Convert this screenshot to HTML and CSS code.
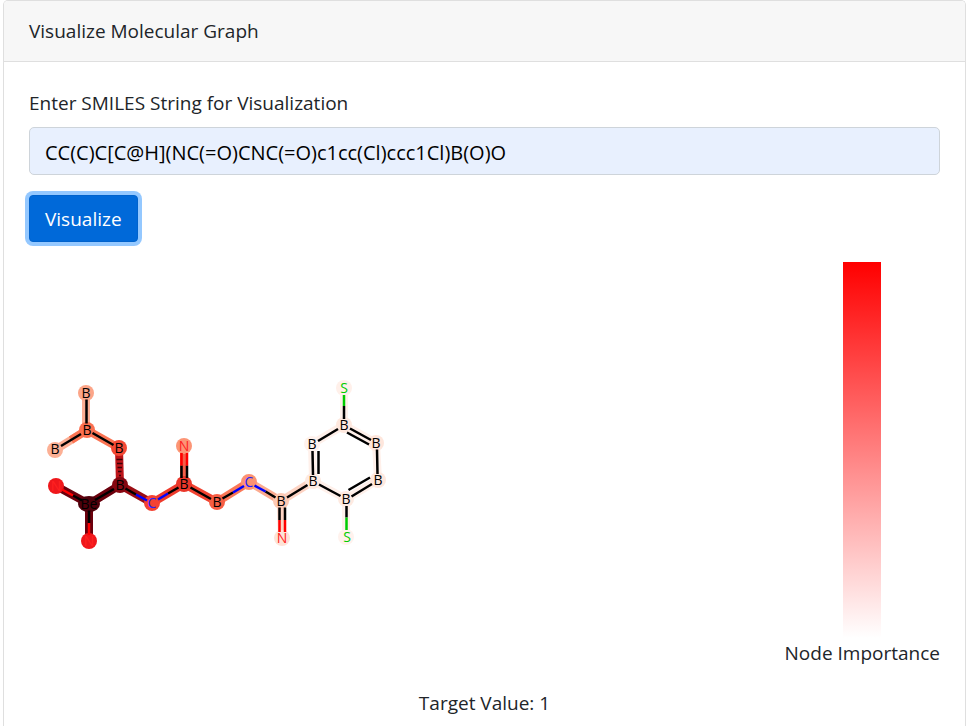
FILE: index.html
```html
<!DOCTYPE html>
<html lang="en">
<head>
<meta charset="utf-8">
<meta name="viewport" content="width=device-width, initial-scale=1">
<title>Visualize Molecular Graph</title>
<link rel="stylesheet" href="styles.css">
</head>
<body>
<main class="card">
  <header class="card-header">Visualize Molecular Graph</header>
  <div class="card-body">
    <form class="smiles-form">
      <label for="smiles">Enter SMILES String for Visualization</label>
      <input id="smiles" type="text" value="CC(C)C[C@H](NC(=O)CNC(=O)c1cc(Cl)ccc1Cl)B(O)O">
      <button type="button">Visualize</button>
    </form>
    <section class="result">
      <svg class="molecule" viewBox="29 262 375 375" role="img" aria-label="Molecular graph">
        <g class="halo">
          <path stroke="#fcae94" d="M86 393L86 430M55 450L87 430"/>
          <path stroke="#fb7453" d="M71 440L87 430L119 448"/>
          <path stroke="#bd151a" d="M119 448L120 485"/>
          <path stroke="#9b0d14" d="M120 485L152 503"/>
          <path stroke="#6b000d" d="M120 485L89 504L56 486M89 504L89 541"/>
          <path stroke="#ee3a2c" d="M152 503L184 484"/>
          <path stroke="#f4604a" d="M184 484L184 446"/>
          <path stroke="#f14331" d="M184 484L217 502"/>
          <path stroke="#fb7858" d="M217 502L249 482"/>
          <path stroke="#fcab90" d="M249 482L281 501"/>
          <path stroke="#fdd3c3" d="M281 501L282 538M281 501L313 481"/>
          <path stroke="#fff0ea" d="M313 481L312 444L344 425L376 443L378 480L346 499ZM344 425L344 388M346 499L346 537"/>
        </g>
        <g class="nodes">
          <circle cx="86" cy="393" r="8" fill="#fca588"/>
          <circle cx="87" cy="430" r="8" fill="#fb7050"/>
          <circle cx="55" cy="450" r="8" fill="#fcb095"/>
          <circle cx="119" cy="448" r="8" fill="#f34935"/>
          <circle cx="120" cy="485" r="8" fill="#850711"/>
          <ellipse cx="89" cy="504" rx="11" ry="8" fill="#4e000b"/>
          <circle cx="56" cy="486" r="8" fill="#ef171b"/>
          <circle cx="89" cy="541" r="8" fill="#ef171b"/>
          <circle cx="152" cy="503" r="8" fill="#f44232"/>
          <circle cx="184" cy="484" r="8" fill="#ea372a"/>
          <circle cx="184" cy="446" r="8" fill="#fc9576"/>
          <circle cx="217" cy="502" r="8" fill="#f75d43"/>
          <circle cx="249" cy="482" r="8" fill="#fc9272"/>
          <circle cx="281" cy="501" r="8" fill="#fdc9b4"/>
          <circle cx="282" cy="538" r="8" fill="#fee2d7"/>
          <circle cx="313" cy="481" r="8" fill="#feeae1"/>
          <circle cx="312" cy="444" r="8" fill="#fff2ed"/>
          <circle cx="344" cy="425" r="8" fill="#fee8de"/>
          <circle cx="344" cy="388" r="8" fill="#fff0ea"/>
          <circle cx="376" cy="443" r="8" fill="#fee6dc"/>
          <circle cx="378" cy="480" r="8" fill="#fee8de"/>
          <circle cx="346" cy="499" r="8" fill="#feeae1"/>
          <circle cx="346" cy="537" r="8" fill="#fff2ed"/>
        </g>
        <g class="bonds">
          <path class="carbon" d="M86.500 399.500V423.500M61 446L81 434M92.500 433L113.500 445M114 489L95 500M82 500.500L73 495.500M89 510.500V523M125.500 488.500L136 494.500M168 493.500L178.500 487.500M181.500 478V465.500M187 478V465.500M190.500 487.500L211 499M222.500 498.500L233 492.500M265.500 491.500L275.500 497.500M287 497.500L307.500 485M279.500 507.500V520M285 507.500V520M313 475L312.500 451M318.500 474V451M318 441L338 429M344 419V406M350 428.500L371 440M347 432.500L369 444.500M377 449.500L377.500 474M372 484L351.500 496.500M370 477.500L348.500 490M340.500 496L319 484.500M346.500 506V517.500"/>
          <path class="wedge" d="M116.500 459.500H122.500M117 463.500H122.500M117.500 467.500H122M118 471.500H121.500M119 475.500H121"/>
          <path class="nitrogen" d="M136 494.500L147 500.500M158 499.500L168 493.500M233 492.500L244 486M254.500 485.500L265.500 491.500"/>
          <path class="oxygen" d="M73 495.500L62 489.500M89 523V535M181.500 465.500V453M187 465.500V453M279.500 520V532M285 520V532"/>
          <path class="sulfur" d="M344 406V395M346.500 517.500V530"/>
        </g>
        <g class="atoms">
          <text x="86" y="398">B</text><text x="87" y="435">B</text><text x="55" y="454">B</text>
          <text x="119" y="453">B</text><text x="120" y="490">B</text><text x="89" y="509">Be</text>
          <text x="184" y="489">B</text><text x="217" y="507">B</text><text x="281" y="506">B</text>
          <text x="313" y="486">B</text><text x="312" y="449">B</text><text x="344" y="430">B</text>
          <text x="376" y="448">B</text><text x="378" y="485">B</text><text x="346" y="504">B</text>
          <g class="blue"><text x="152" y="508">C</text><text x="249" y="487">C</text></g>
          <g class="red"><text x="56" y="491">N</text><text x="89" y="546">N</text><text x="184" y="451">N</text><text x="282" y="543">N</text></g>
          <g class="green"><text x="344" y="393">S</text><text x="347" y="542">S</text></g>
        </g>
      </svg>
      <div class="legend">
        <div class="scale"></div>
        <span>Node Importance</span>
      </div>
    </section>
    <p class="target">Target Value: 1</p>
  </div>
</main>
</body>
</html>
```
FILE: styles.css
```css
* { box-sizing: border-box; }

body {
  margin: 0;
  background: #fff;
  color: #212529;
  font: 19px/30px "Segoe UI", "Open Sans", "Noto Sans", sans-serif;
}

.card {
  min-height: 100vh;
  margin: 0 3px;
  border: 1px solid #dfdfdf;
  border-bottom: 0;
  border-radius: 5px 5px 0 0;
}

.card-header {
  padding: 15px 25px;
  background: #f7f7f7;
  border-bottom: 1px solid #dfdfdf;
  border-radius: 4px 4px 0 0;
}

.card-body { padding: 26px 25px 0; }

.smiles-form {
  display: flex;
  flex-direction: column;
  align-items: flex-start;
}

.smiles-form label { margin-bottom: 9px; }

.smiles-form input {
  width: 100%;
  height: 48px;
  padding: 10px 15px 8px;
  border: 1px solid #ced4da;
  border-radius: 5px;
  background: #e8f0fe;
  color: #000;
  font: inherit;
  font-size: 20px;
}

.smiles-form button {
  height: 47px;
  margin-top: 20px;
  padding: 8px 15px;
  border: 1px solid #0062cc;
  border-radius: 4px;
  background: #0069d9;
  box-shadow: 0 0 0 4px #94c8ff;
  color: #fff;
  font: inherit;
}

.result {
  display: flex;
  justify-content: space-between;
  align-items: flex-start;
  margin-top: 20px;
}

.molecule { width: 375px; height: 375px; }

.legend {
  display: flex;
  flex-direction: column;
  align-items: center;
}

.scale {
  width: 38px;
  height: 376px;
  background: linear-gradient(red, white);
}

.target {
  margin: 20px 0 0;
  text-align: center;
}

.halo path {
  fill: none;
  stroke-width: 8;
  stroke-linejoin: round;
}

.bonds path {
  fill: none;
  stroke-width: 2.5;
}

.bonds .carbon { stroke: #000; }
.bonds .wedge { stroke: #3b0007; stroke-width: 1.5; }
.bonds .nitrogen { stroke: #00f; }
.bonds .oxygen { stroke: #f00; }
.bonds .sulfur { stroke: #0c0; }

.atoms {
  fill: #000;
  font: 14px "Open Sans", "Noto Sans", sans-serif;
  text-anchor: middle;
}

.atoms .blue { fill: #22f; }
.atoms .red { fill: #f22; }
.atoms .green { fill: #0c0; }
```
